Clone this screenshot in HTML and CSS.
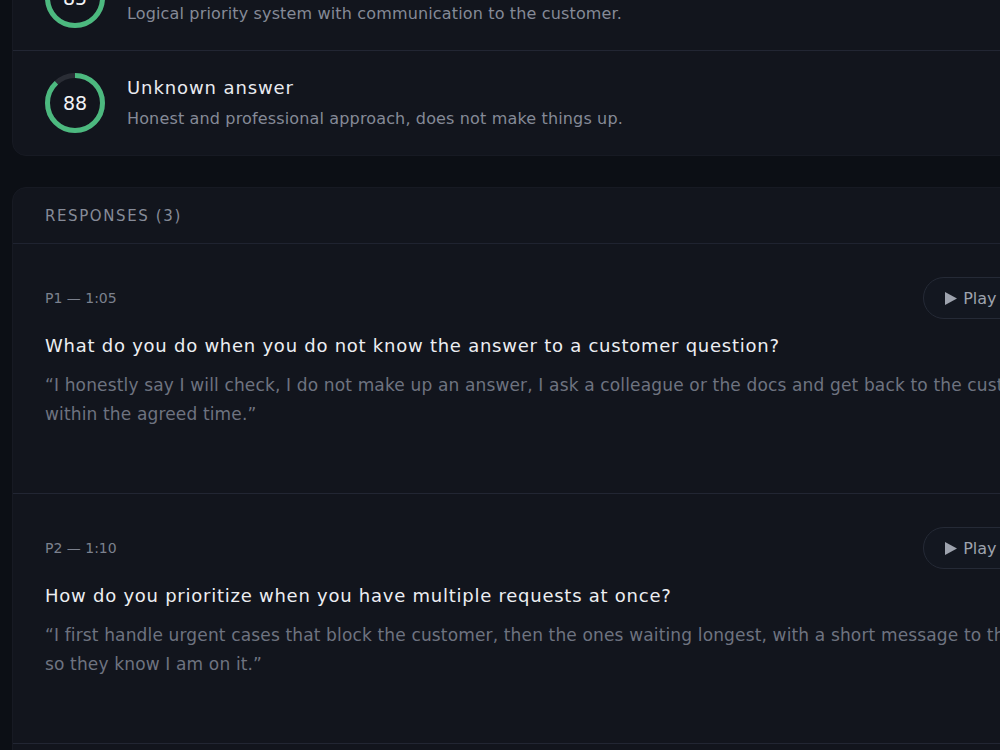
FILE: index.html
```html
<!DOCTYPE html>
<html lang="en">
<head>
    <meta charset="UTF-8">
    <meta name="viewport" content="width=device-width, initial-scale=1.0">
    <title>Interview Review</title>
    <link rel="stylesheet" href="styles.css">
</head>
<body>
    <div class="page">

        <!-- per-criterion scores -->
        <section class="card score-card">
            <div class="score-row">
                <div class="ring">
                    <svg width="60" height="60" viewBox="0 0 60 60">
                        <circle class="ring-track" cx="30" cy="30" r="27.5"></circle>
                        <circle class="ring-value" cx="30" cy="30" r="27.5" stroke-dasharray="146.9 172.8"></circle>
                    </svg>
                    <span class="ring-label">85</span>
                </div>
                <div class="score-text">
                    <div class="score-title">Multiple requests</div>
                    <div class="score-desc">Logical priority system with communication to the customer.</div>
                </div>
            </div>
            <div class="score-row">
                <div class="ring">
                    <svg width="60" height="60" viewBox="0 0 60 60">
                        <circle class="ring-track" cx="30" cy="30" r="27.5"></circle>
                        <circle class="ring-value" cx="30" cy="30" r="27.5" stroke-dasharray="152.1 172.8"></circle>
                    </svg>
                    <span class="ring-label">88</span>
                </div>
                <div class="score-text">
                    <div class="score-title">Unknown answer</div>
                    <div class="score-desc">Honest and professional approach, does not make things up.</div>
                </div>
            </div>
        </section>

        <!-- recorded answers -->
        <section class="card responses">
            <div class="card-header">Responses (3)</div>

            <div class="response">
                <div class="response-head">
                    <span class="response-meta">P1 — 1:05</span>
                    <button class="play-btn">
                        <svg class="play-icon" width="12" height="13" viewBox="0 0 12 13"><path d="M0 0 L12 6.5 L0 13 Z"/></svg>
                        Play audio
                    </button>
                </div>
                <div class="response-question">What do you do when you do not know the answer to a customer question?</div>
                <p class="response-quote">“I honestly say I will check, I do not make up an answer, I ask a colleague or the docs and get back to the customer within the agreed time.”</p>
            </div>

            <div class="response">
                <div class="response-head">
                    <span class="response-meta">P2 — 1:10</span>
                    <button class="play-btn">
                        <svg class="play-icon" width="12" height="13" viewBox="0 0 12 13"><path d="M0 0 L12 6.5 L0 13 Z"/></svg>
                        Play audio
                    </button>
                </div>
                <div class="response-question">How do you prioritize when you have multiple requests at once?</div>
                <p class="response-quote">“I first handle urgent cases that block the customer, then the ones waiting longest, with a short message to them so&nbsp;they know I am on it.”</p>
            </div>

            <div class="response">
                <div class="response-head">
                    <span class="response-meta">P3 — 0:58</span>
                    <button class="play-btn">
                        <svg class="play-icon" width="12" height="13" viewBox="0 0 12 13"><path d="M0 0 L12 6.5 L0 13 Z"/></svg>
                        Play audio
                    </button>
                </div>
                <div class="response-question">How do you handle an angry customer?</div>
                <p class="response-quote">“I let them finish, acknowledge the problem and explain what I will do next.”</p>
            </div>
        </section>
    </div>
</body>
</html>
```

FILE: styles.css
```css
html, body {
    margin: 0;
    background: #0c0f15;
    overflow: hidden;
}
body {
    font-family: "DejaVu Sans", "Liberation Sans", sans-serif;
    color: #e9ebf0;
}
.page {
    width: 1081px;
    padding: 0 0 40px 12px;
    margin-top: -55px;
}
.card {
    background: #12151d;
    border: 1px solid #171a23;
    border-radius: 14px;
}
.score-card {
    margin-bottom: 31px;
}
.score-row {
    display: flex;
    align-items: center;
    gap: 22px;
    padding: 22px 32px;
}
.score-row + .score-row {
    border-top: 1px solid #222633;
}
.ring {
    position: relative;
    width: 60px;
    height: 60px;
    flex: none;
}
.ring svg {
    display: block;
    transform: rotate(-90deg);
}
.ring circle {
    fill: none;
    stroke-width: 5;
}
.ring-track { stroke: #2a2d35; }
.ring-value { stroke: #4cb97f; }
.ring-label {
    position: absolute;
    inset: 0;
    display: flex;
    align-items: center;
    justify-content: center;
    font-size: 19px;
    color: #f2f3f6;
}
.score-title {
    font-size: 18px;
    line-height: 24px;
    letter-spacing: 0.9px;
    color: #e9ebf0;
}
.score-desc {
    margin-top: 8px;
    font-size: 16px;
    line-height: 22px;
    letter-spacing: 0.15px;
    color: #858a97;
}
.card-header {
    padding: 17px 32px 16px;
    font-size: 15px;
    line-height: 22px;
    letter-spacing: 1.6px;
    text-transform: uppercase;
    color: #868b98;
    border-bottom: 1px solid #1f2330;
}
.response {
    padding: 33px 32px 64px;
}
.response + .response {
    border-top: 1px solid #222633;
}
.response-head {
    display: flex;
    align-items: center;
    justify-content: space-between;
}
.response-meta {
    font-size: 14px;
    color: #7c818e;
}
.play-btn {
    display: flex;
    align-items: center;
    gap: 6px;
    height: 42px;
    padding: 0 13px 0 21px;
    background: #131720;
    border: 1px solid #252a36;
    border-radius: 21px;
    font-family: inherit;
    font-size: 16px;
    color: #9ea3ae;
}
.play-icon {
    fill: #9ea3ae;
}
.response-question {
    margin-top: 15px;
    font-size: 18px;
    line-height: 24px;
    letter-spacing: 0.75px;
    color: #eceef2;
}
.response-quote {
    margin: 13px 0 0;
    font-size: 17px;
    line-height: 29px;
    letter-spacing: 0.15px;
    color: #6e7380;
}
```
